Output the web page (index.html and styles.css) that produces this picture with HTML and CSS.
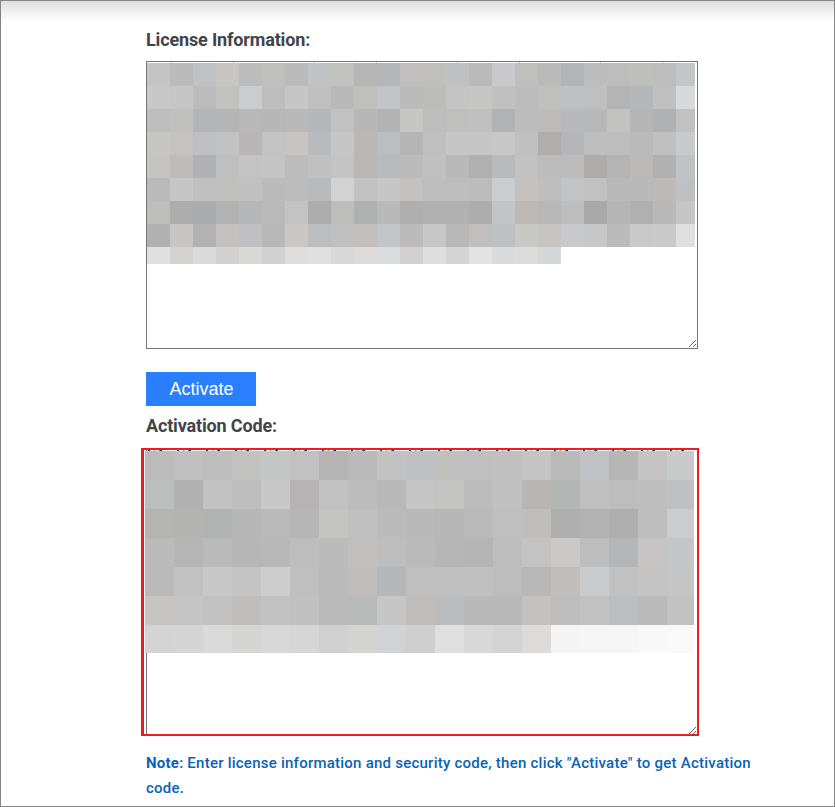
FILE: index.html
```html
<!DOCTYPE html>
<html lang="en">
<head>
    <meta charset="UTF-8">
    <meta name="viewport" content="width=device-width, initial-scale=1.0">
    <link rel="stylesheet" href="styles.css">
    <title>Activation</title>
</head>
<body>
    <div class="page">
        <label class="field-label" for="license">License Information:</label>
        <div class="field">
            <textarea class="code-box" id="license"></textarea>
            <div class="ticks ticks-license"></div>
            <div class="mosaic mosaic-license" id="license-mosaic"></div>
        </div>

        <button class="btn-activate">Activate</button>

        <label class="field-label label-code" for="code">Activation Code:</label>
        <div class="field">
            <textarea class="code-box" id="code"></textarea>
            <div class="ticks ticks-code"></div>
            <div class="mosaic mosaic-code" id="code-mosaic"></div>
            <div class="red-frame"></div>
        </div>

        <p class="note"><strong>Note</strong>: Enter license information and security code, then click "Activate" to get Activation code.</p>
    </div>
    <script src="mosaic.js"></script>
</body>
</html>
```

FILE: styles.css
```css
* {
    box-sizing: border-box;
}


body {
    margin: 0;
    background-color: #ffffff;
    font-family: Roboto, "Liberation Sans", sans-serif;
}


.page {
    height: 807px;
    padding: 27px 0 0 145px;
    overflow: hidden;
    border: 1px solid #858585;
    background: linear-gradient(#dedede, #ffffff 20px);
}


.field-label {
    display: block;
    height: 24px;
    margin-bottom: 9px;
    font-size: 18px;
    font-weight: 700;
    line-height: 24px;
    letter-spacing: -0.15px;
    color: #424448;
}


.label-code {
    margin-top: 8px;
    margin-bottom: 10px;
}


.field {
    position: relative;
    width: 552px;
    height: 288px;
}


.code-box {
    display: block;
    width: 552px;
    height: 288px;
    margin: 0;
    padding: 2px;
    border: 1px solid #767676;
    border-radius: 0;
    background-color: #ffffff;
}


.mosaic {
    position: absolute;
    display: grid;
}


.mosaic-license {
    top: 2px;
    left: 1px;
    grid-template-columns: repeat(23, 23px) 19px;
    grid-template-rows: repeat(8, 23px) 17px;
}


.mosaic-code {
    top: 3px;
    left: -1px;
    grid-template-columns: repeat(18, 29px) 27px;
    grid-template-rows: repeat(6, 29px) 28px;
}


.ticks {
    position: absolute;
    height: 1px;
}


.ticks-license {
    top: 1px;
    left: 1px;
    width: 548px;
    background: repeating-linear-gradient(90deg, transparent 0 24px, #c9bdb0 24px 25px, transparent 25px 86px, #b5bccb 86px 87px, transparent 87px 143px);
}


.ticks-code {
    top: 2px;
    left: -1px;
    width: 549px;
    background: repeating-linear-gradient(90deg, transparent 0 3px, #2a2a40 3px 5px, transparent 5px 9px, #c98a50 9px 10px, transparent 10px 14px, #4a78c0 14px 15px, #20202a 15px 17px, transparent 17px 29px);
}


.red-frame {
    position: absolute;
    top: 0;
    right: -1px;
    bottom: 0;
    left: -5px;
    border: 2px solid #ed1c24;
    border-left-width: 3px;
}


.btn-activate {
    display: block;
    width: 110px;
    height: 34px;
    margin-top: 23px;
    padding: 0 0 0 1px;
    border: none;
    background-color: #2a7fff;
    font-family: "Liberation Sans", sans-serif;
    font-size: 18px;
    color: #ffffff;
    cursor: pointer;
}


.note {
    width: 620px;
    margin: 15px 0 0;
    font-size: 15px;
    font-weight: 500;
    line-height: 25px;
    letter-spacing: 0.24px;
    color: #0a62b8;
}
```

FILE: mosaic.js
```js
const licenseRows = [
    'c4c4c4 bcbbbb c0c1c3 c7c6c5 bcbcbd bfbfbe bbbbbb c1c2c3 c2c2c1 b7b6b6 b5b6b7 c0bfbe bfbfbe bfc0c1 bbbaba c9c9cc bfbfbe bbbaba b3b4b5 bcbcbc bdbdbd bebebd bdbdbd c5c6c7',
    'c8c8c8 c7c6c6 bcbcbc c1c1c0 cbcccd bdbdbd c6c6c6 bfbfbf b9b9b9 bfbfbe c3c4c5 bbbbba bcbcbb c4c4c4 c6c6c5 c0c0c1 bcbcbc bfbfbe bfc0c1 bfbfbf b5b4b4 b6b7b9 c0c0c0 d8d9da',
    'bdbdbd bfbfbe b4b5b6 b5b5b5 b8b8b8 b7b7b7 b9b9b9 b6b7b8 c1c1c1 b7b7b7 b3b3b3 c6c6c5 bdbdbd bfbfbe c0c0c0 b1b2b3 bcbcbc bebcbb b8b9ba b8b8b8 c2c2c1 b6b5b5 b0b1b2 c0c1c0',
    'c6c6c5 c5c3c2 bfc0c2 c2c2c2 b8b6b7 c2c3c2 c6c5c4 babbbc c6c6c6 b9b8b7 bcbdbe b5b5b5 bfbfbf c6c6c6 c6c6c6 c6c7c6 c0c0c0 b0aeac b5b6b7 bebebe bdbdbd bababa c0c0c0 c9cacb',
    'c5c4c3 bebcba b0b1b3 bfbfbf c3c3c3 c4c4c4 bcbcbd c0c0c0 c4c4c4 b9b8b7 b9babb bbbbbb c0c0c0 b9b9b9 b0b0b0 b9babb c2c2c2 bdbcbc bcbcbc aeadac b4b4b5 bbbab9 b1b1b1 c1c2c3',
    'bababa c6c6c6 c0c0c0 bfbfbe c0c0c0 bbbbbb bcbcbc b9babc d2d2d2 c2c2c2 c6c6c6 c3c2c1 bdbdbd bdbdbd bcbcbc cbcccd c3c2c1 bfbebe c2c3c4 c1c1c1 b9b9b9 b9b9b9 bcbbba bfc0c2',
    'bdbdbc aeadad abacad b3b2b2 b6b7b8 bababa c3c3c3 adadad bdbdbc afb0b0 b9b9b9 afafaf b1b1b1 b1b1b1 adadad c3c4c5 bbbab9 b8b8b8 bdbdbd a9a9a9 b5b5b5 b0b0b0 b8b9b8 c6c6c6',
    'b0b0b0 c8c5c5 b2b2b2 c3c2c1 bfc0c2 b8b8b8 c9c8c7 bcbdbe c0c0c0 c3bfbf c4c5c6 bbbbbb c7c7c7 b8b8b9 c0bfbe bfc0c2 c8c8c7 c7c4c4 c8c9ca c8c8c8 bbbbbb c9c9ca cacacb e0e0e0',
    'e0e0e0 d2d2d1 dadada d1d1d1 d9d9d8 d1d1d1 dedede dfdfdf d8d8d8 dcdbda dadbdc d1d0cf dddfde d4d4d4 e3e3e3 dadada dcdcdb d5d6d7'
];

const codeRows = [
    'bcbcbc c0c0c0 bdbdbd c1c1c0 c4c6c5 c1c1c1 b5b3b4 bababa c2c2c2 bfc0c1 c0c0bf bfbfbf c0c0c0 c5c4c3 b9bab9 c0c1c4 b6b6b6 c5c4c3 c9cacb',
    'bcbdbd b1b1b1 c2c2c2 bdbdbd c8c8c8 b5b3b4 c1c1c1 bcbcbc b9b9b9 c5c5c5 c3c3c2 bcbcbc c0c0c0 b7b6b5 b4b5b5 bfbfbf bdbdbd bebebe bfc0c1',
    'b4b4b3 b3b3b2 b1b2b2 b7b7b7 bababa b6b6b6 c4c4c3 c0c0c0 bbbbbb b9b9b9 b7b7b7 bababa bfbfbf bfbebd afafaf b2b2b2 aeaeae bebebe cbcccd',
    'bbbbbb b6b6b6 bababa b7b7b7 b8b8b8 bdbdbd babbba c0bfbe bcbdbc bababa b6b6b6 b5b5b6 bdbdbd c3c3c3 cac9c8 bdbdbd b5b6b7 c6c5c4 c5c6c7',
    'bababa c1c1c1 c8c8c8 c4c4c4 cdcdcd bfbfbf bababa bfbdbc b6b7b8 bfbfbf bfbfbf c0c0c0 bdbdbd b8b8b8 bfbebd cacbcc c1c1c1 c4c4c4 c5c5c5',
    'c6c5c4 c5c5c5 c1c2c1 bebdbc c2c2c2 c0c0c0 bababa b9baba c6c6c6 bebdbc bbbcbd b9b9b9 b9b9b9 c2c1c0 bdbdbd c1c1c1 bcbdbe bababa c2c2c2',
    'd4d4d4 d5d5d5 dadada d5d5d4 d8d8d8 d6d6d6 d0d0d0 d3d3d2 d1d2d3 cfcfcf dfdfdf d8d8d8 d4d4d4 dcdbda f4f5f4 f6f6f6 f6f6f6 f8f8f8 f9f9f9'
];

function fillMosaic(id, rows) {
    const mosaic = document.getElementById(id);
    rows.forEach(function (row) {
        row.split(' ').forEach(function (color) {
            const cell = document.createElement('div');
            cell.style.backgroundColor = '#' + color;
            mosaic.appendChild(cell);
        });
    });
}

fillMosaic('license-mosaic', licenseRows);
fillMosaic('code-mosaic', codeRows);
```
